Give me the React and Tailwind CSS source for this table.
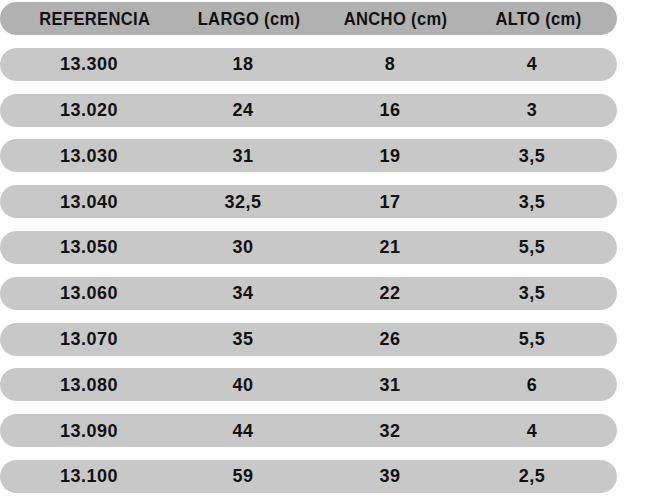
const rows = [
  ["13.300", "18", "8", "4"],
  ["13.020", "24", "16", "3"],
  ["13.030", "31", "19", "3,5"],
  ["13.040", "32,5", "17", "3,5"],
  ["13.050", "30", "21", "5,5"],
  ["13.060", "34", "22", "3,5"],
  ["13.070", "35", "26", "5,5"],
  ["13.080", "40", "31", "6"],
  ["13.090", "44", "32", "4"],
  ["13.100", "59", "39", "2,5"],
];

const headers = ["REFERENCIA", "LARGO (cm)", "ANCHO (cm)", "ALTO (cm)"];

const App = () => {
  return (
    <div
      className="w-[646px] h-[496px] bg-white flex flex-col gap-[12.8px] pt-[2px] text-[#111] font-bold"
      style={{ fontFamily: '"Liberation Sans", Arial, sans-serif' }}
    >
      {/* header */}
      <div className="w-[617px] h-[33px] shrink-0 rounded-full bg-[#b1b1b1] grid grid-cols-[178px_130px_164px_120px] items-center pl-[6px] text-[19px] tracking-[0.4px]">
        {headers.map((h) => (
          <span key={h} className="flex justify-center leading-none">
            <span className="inline-block scale-x-[0.87] whitespace-nowrap">{h}</span>
          </span>
        ))}
      </div>

      {/* data rows */}
      {rows.map((r) => (
        <div
          key={r[0]}
          className="w-[617px] h-[33px] shrink-0 rounded-full bg-[#c8c8c8] grid grid-cols-[178px_130px_164px_120px] items-center text-[18px] tracking-[0.5px]"
        >
          {r.map((v, i) => (
            <span key={i} className="text-center leading-none">{v}</span>
          ))}
        </div>
      ))}
    </div>
  );
};

export default App;
